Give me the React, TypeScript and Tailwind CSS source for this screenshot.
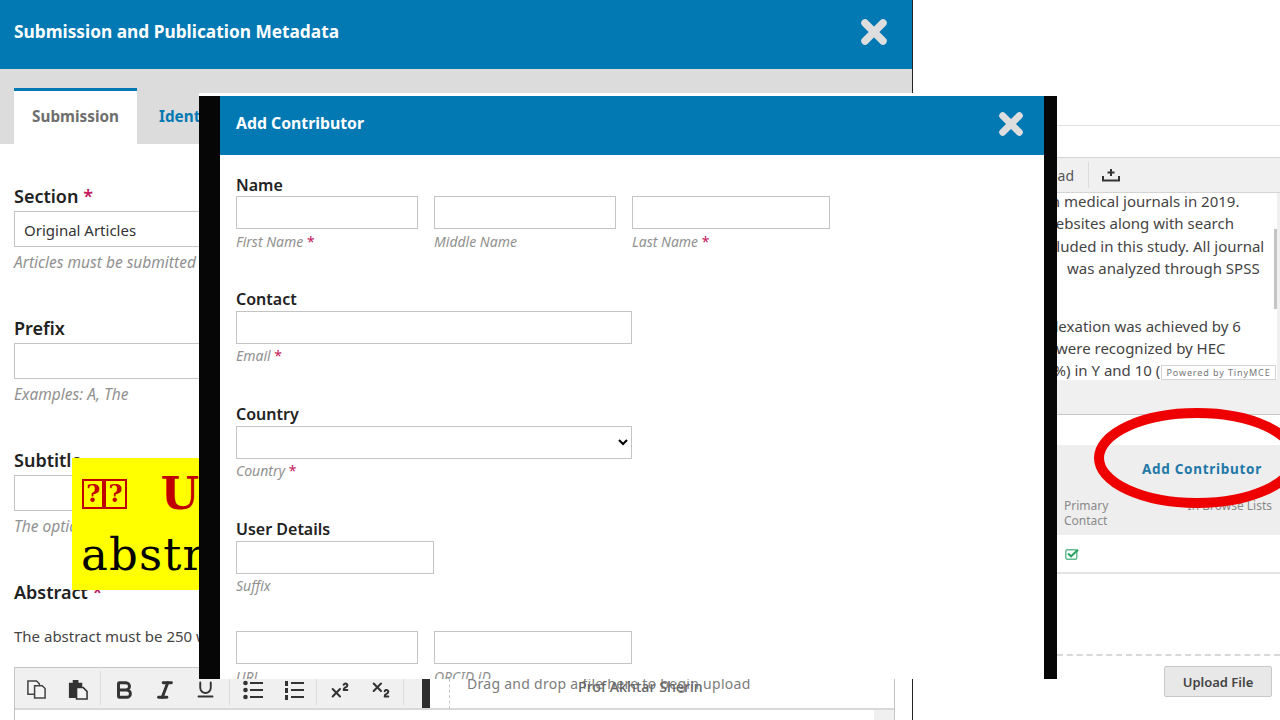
import { Bold, Italic, Subscript, Superscript, Underline } from "lucide-react";

const SANS = "font-['Noto_Sans',sans-serif]";

function CloseIcon({ className }: { className: string }) {
  return (
    <svg viewBox="0 0 26 26" className={className}>
      <path d="M4 4 22 22M22 4 4 22" stroke="#dedede" strokeWidth="7.5" strokeLinecap="round" />
    </svg>
  );
}

function Req() {
  return <span className="not-italic text-[#c2185b]"> *</span>;
}

function Hint({ text, req }: { text: string; req?: boolean }) {
  return (
    <div className="h-5 text-[14px] leading-5 italic text-[#919191] whitespace-nowrap">
      {text}
      {req && <Req />}
    </div>
  );
}

function LeftField({ label, hint, value, req }: { label: string; hint: string; value?: string; req?: boolean }) {
  return (
    <div className="mb-[44px]">
      <div className="h-6 mb-[3px] text-[18px] leading-6 font-semibold text-[#222]">
        {label}
        {req && <span className="text-[#c2185b]"> *</span>}
      </div>
      <div className="h-9 border border-[#c4c4c4] px-[9px] text-[15px] leading-[36px] text-[#333]">{value}</div>
      <div className="mt-[5px] h-5 text-[15.5px] leading-5 italic text-[#919191] whitespace-nowrap">{hint}</div>
    </div>
  );
}

function Box({ className }: { className: string }) {
  return <input className={"block h-[33px] border border-[#c4c4c4] bg-white " + className} />;
}

function ModalLabel({ text }: { text: string }) {
  return <div className="h-5 mb-[2px] text-[16px] leading-5 font-semibold text-[#222]">{text}</div>;
}

function ToolButton({ children }: { children: React.ReactNode }) {
  return <div className="w-[41px] pt-[3px] flex items-center justify-center text-[#333]">{children}</div>;
}

function Sep() {
  return <div className="w-px mx-[2px] my-[3px] bg-[#dcdcdc]" />;
}

function Toolbar() {
  return (
    <div className="w-[407px] h-[40px] pl-[1px] flex shrink-0 bg-[#f0f0f0]">
      <ToolButton>
        <svg viewBox="0 0 22 22" className="w-[21px] h-[21px]" fill="#f4f4f4" stroke="#444" strokeWidth="1.6">
          <path d="M2 2h9l3 3v11H2z" />
          <path d="M9 7h8l3 3v10H9z" />
        </svg>
      </ToolButton>
      <ToolButton>
        <svg viewBox="0 0 22 22" className="w-[21px] h-[21px]">
          <path d="M2 4h4V1h6v3h4v5h-5v11H2z" fill="#333" />
          <path d="M10 9h7l4 4v8H10z" fill="#f4f4f4" stroke="#333" strokeWidth="1.6" />
        </svg>
      </ToolButton>
      <Sep />
      <ToolButton>
        <Bold size={22} strokeWidth={3.2} />
      </ToolButton>
      <ToolButton>
        <Italic size={22} strokeWidth={3.2} />
      </ToolButton>
      <ToolButton>
        <Underline size={21} strokeWidth={2.2} />
      </ToolButton>
      <div className="w-px ml-[3px] mr-[2px] my-[3px] bg-[#dcdcdc]" />
      <ToolButton>
        <svg viewBox="0 0 20 20" className="w-5 h-5" fill="#333">
          <circle cx="2.5" cy="3" r="2.3" />
          <circle cx="2.5" cy="10" r="2.3" />
          <circle cx="2.5" cy="17" r="2.3" />
          <rect x="7" y="2" width="13" height="2" />
          <rect x="7" y="9" width="13" height="2" />
          <rect x="7" y="16" width="13" height="2" />
        </svg>
      </ToolButton>
      <ToolButton>
        <svg viewBox="0 0 20 20" className="w-5 h-5" fill="#333">
          <rect x="1" y="1" width="3" height="5" />
          <rect x="1" y="8" width="3" height="5" />
          <rect x="1" y="15" width="3" height="5" />
          <rect x="7" y="2" width="13" height="2" />
          <rect x="7" y="9" width="13" height="2" />
          <rect x="7" y="16" width="13" height="2" />
        </svg>
      </ToolButton>
      <div className="w-px mx-[2px] my-[3px] bg-[#dcdcdc]" />
      <ToolButton>
        <Superscript size={22} strokeWidth={2.2} />
      </ToolButton>
      <ToolButton>
        <Subscript size={22} strokeWidth={2.2} />
      </ToolButton>
      <Sep />
    </div>
  );
}

function LeftWindow() {
  return (
    <div className="absolute left-0 top-0 w-[913px] h-[720px] border-r-[1.5px] border-[#222] bg-white overflow-hidden">
      <div className="h-[69px] pb-[6px] bg-[#0379b4] flex items-center justify-between pl-[14px] pr-[25px]">
        <span className="text-[17.3px] font-bold text-white">Submission and Publication Metadata</span>
        <CloseIcon className="w-[26px] h-[26px]" />
      </div>
      <div className="h-[75px] bg-[#dcdcdc] flex items-end pl-[14px]">
        <div className="w-[123px] h-[56px] bg-white border-t-[3px] border-[#0379b4] text-center text-[15.3px] leading-[50px] font-bold text-[#6e6e6e]">
          Submission
        </div>
        <div className="ml-[22px] h-[56px] text-[15.3px] leading-[56px] font-bold text-[#0379b4]">Identifiers</div>
      </div>
      <div className="pl-[14px] pr-[17px] pt-[40px]">
        <LeftField label="Section" req value="Original Articles" hint="Articles must be submitted to one of the journal's sections." />
        <LeftField label="Prefix" hint="Examples: A, The" />
        <LeftField label="Subtitle" hint="The optional subtitle of the article" />
        <div className="h-6 text-[18px] leading-6 font-semibold text-[#222]">
          Abstract <span className="text-[#c2185b]">*</span>
        </div>
        <div className="mt-[22px] h-5 text-[15px] leading-5 text-[#444] whitespace-nowrap">The abstract must be 250 words or less.</div>
        <div className="relative mt-[21px] h-[53px] border border-[#c4c4c4] border-b-0">
          <div className="flex h-[42px] border-b-[2px] border-[#d8d8d8]">
            <Toolbar />
            <div className="w-[8px] h-[29px] self-end bg-[#2e2e2e]" />
          </div>
          <div className="absolute right-0 top-[42px] w-[20px] h-[11px] bg-[#f0f0f0]" />
          <div className="absolute left-[434px] top-[11px] h-[30px] border-l-[1.5px] border-dashed border-[#c4c4c4]" />
          <div className="absolute left-[452px] top-[5px] text-[14px] tracking-[0.28px] text-[#7c7c7c] whitespace-nowrap">
            Drag and drop a file here to begin upload
          </div>
          <div className="absolute left-[563px] top-[8px] text-[14.2px] font-medium text-[#666] whitespace-nowrap">Prof Akhtar Sherin</div>
        </div>
      </div>
    </div>
  );
}

function Modal() {
  return (
    <div className="absolute left-[199px] top-[93px] w-[858px] h-[586px] border-t-[3px] border-white bg-[#060606] pl-[21px] pr-[13px] overflow-hidden">
      <div className="h-full bg-white">
        <div className="h-[59px] pb-[4px] bg-[#0379b4] flex items-center justify-between pl-4 pr-[21px]">
          <span className="text-[15.8px] font-bold text-white">Add Contributor</span>
          <CloseIcon className="w-[24px] h-[24px]" />
        </div>
        <div className="pl-4 pt-5 flex flex-col gap-[38px]">
          <div>
            <div className="h-5 mb-px text-[16px] leading-5 font-semibold text-[#222]">Name</div>
            <div className="flex gap-4 -mb-px">
              <div>
                <Box className="w-[182px]" />
                <div className="mt-[3px]">
                  <Hint text="First Name" req />
                </div>
              </div>
              <div>
                <Box className="w-[182px]" />
                <div className="mt-[3px]">
                  <Hint text="Middle Name" />
                </div>
              </div>
              <div>
                <Box className="w-[198px]" />
                <div className="mt-[3px]">
                  <Hint text="Last Name" req />
                </div>
              </div>
            </div>
          </div>
          <div>
            <ModalLabel text="Contact" />
            <Box className="w-[396px]" />
            <div className="mt-[2px]">
              <Hint text="Email" req />
            </div>
          </div>
          <div>
            <ModalLabel text="Country" />
            <select className="block w-[396px] h-[33px] border border-[#c4c4c4] bg-white" />
            <div className="mt-[2px]">
              <Hint text="Country" req />
            </div>
          </div>
          <div>
            <ModalLabel text="User Details" />
            <Box className="w-[198px]" />
            <div className="mt-[2px]">
              <Hint text="Suffix" />
            </div>
          </div>
          <div className="flex gap-4 -mt-[3px]">
            <div>
              <Box className="w-[182px]" />
              <div className="mt-[3px]">
                <Hint text="URL" />
              </div>
            </div>
            <div>
              <Box className="w-[198px]" />
              <div className="mt-[3px]">
                <Hint text="ORCID iD" />
              </div>
            </div>
          </div>
        </div>
      </div>
    </div>
  );
}

const EDITOR_LINES = [
  { text: "in medical journals in 2019.", cls: "ml-[-10px]" },
  { text: "websites along with search", cls: "ml-[-13px]" },
  { text: "included in this study. All journal", cls: "ml-[-21px]" },
  { text: "was analyzed through SPSS", cls: "ml-[10px]" },
  { text: "indexation was achieved by 6", cls: "ml-[-21px] mt-[35px]" },
  { text: "were recognized by HEC", cls: "ml-[-1px]" },
  { text: "5%) in Y and 10 (", cls: "ml-[-12px]" },
];

function RightPanel() {
  return (
    <div className={"absolute left-[1057px] top-[125px] w-[223px] h-[595px] overflow-hidden bg-white border-t border-[#e2e2e2] " + SANS}>
      <div className="h-[31px]" />
      <div className="h-[36px] bg-[#f0f0f0] border-y border-[#d4d4d4] flex items-center">
        <span className="w-[31px] text-right pr-[14px] text-[14px] text-[#555]">ad</span>
        <div className="w-px h-[26px] bg-[#dcdcdc]" />
        <svg viewBox="0 0 18 14" className="ml-[13px] w-[18px] h-[14px]" fill="none" stroke="#333" strokeWidth="2">
          <path d="M9 1v7M5.5 4.5h7M1 8v4.5h16V8" />
        </svg>
      </div>
      <div className="relative h-[187px] bg-white overflow-hidden border-r-[3px] border-[#f0f0f0]">
        <div className="-mt-[3px]">
          {EDITOR_LINES.map((line, i) => (
            <div key={i} className={"h-[22.4px] text-[15px] leading-[22px] text-[#444] whitespace-nowrap " + line.cls}>
              {line.text}
            </div>
          ))}
        </div>
        <div className="absolute right-0 top-[36px] w-[3px] h-[80px] bg-[#c4c4c4]" />
        <div className="absolute left-[104px] top-[172px] w-[115px] h-[15px] bg-white border border-[#d4d4d4] text-center text-[9px] leading-[13px] tracking-[0.9px] text-[#777] whitespace-nowrap">
          Powered by TinyMCE
        </div>
      </div>
      <div className="h-[35px] bg-[#f0f0f0] border-b border-[#c8c8c8]" />
      <div className="h-[30px]" />
      <div className="relative h-[90px] bg-[#eeeeee]">
        <div className="absolute left-[85px] top-[14px] text-[13.5px] font-bold tracking-[0.7px] text-[#1f78a8] whitespace-nowrap">Add Contributor</div>
        <div className="absolute left-[7px] top-[53px] text-[12px] leading-[15px] text-[#8a8a8a]">
          Primary
          <br />
          Contact
        </div>
        <div className="absolute right-[8px] top-[53px] text-[12px] leading-[15px] text-[#8a8a8a] whitespace-nowrap">In Browse Lists</div>
      </div>
      <div className="h-[39px] border-b-2 border-[#e4e4e4] flex items-center pl-[8px]">
        <svg viewBox="0 0 14 12" className="w-[14px] h-[12px]" fill="none">
          <rect x="0.8" y="1.8" width="11" height="9.4" rx="1.5" stroke="#5fb98a" strokeWidth="1.4" />
          <path d="M3 5.5 6 8.3 13 1.8" stroke="#27a35f" strokeWidth="2" />
        </svg>
      </div>
      <div className="h-[82px] border-b-2 border-dashed border-[#d8d8d8]" />
      <div className="flex justify-end pr-2 pt-[10px]">
        <div className="w-[108px] h-[31px] rounded-[2px] border border-[#c8c8c8] bg-[#e8e8e8] text-center text-[13px] leading-[30px] font-semibold text-[#444]">
          Upload File
        </div>
      </div>
    </div>
  );
}

function YellowNote() {
  return (
    <div className="absolute left-[72px] top-[458px] w-[127px] h-[132px] bg-[#ffff00] overflow-hidden font-['DejaVu_Serif',serif]">
      <div className="flex items-center h-[72px] pl-[10px] text-[#c00000]">
        <span className="w-[23px] h-[30px] border-2 border-[#c00000] text-center text-[24px] leading-[26px] font-bold">?</span>
        <span className="w-[23px] h-[30px] border-2 border-[#c00000] text-center text-[24px] leading-[26px] font-bold">?</span>
        <span className="ml-[34px] text-[44px] leading-none font-bold">U</span>
      </div>
      <div className="pl-[9px] text-[45px] leading-[50px] tracking-[1.2px] text-black whitespace-nowrap">abstract</div>
    </div>
  );
}

export default function App() {
  return (
    <div className={"relative w-[1280px] h-[720px] overflow-hidden bg-white " + SANS}>
      <LeftWindow />
      <RightPanel />
      <YellowNote />
      <Modal />
      <svg className="absolute left-[1090px] top-[404px] w-[190px] h-[110px]" viewBox="0 0 190 110">
        <ellipse cx="107" cy="54" rx="98" ry="45" fill="none" stroke="#ee0000" strokeWidth="10" />
      </svg>
    </div>
  );
}
